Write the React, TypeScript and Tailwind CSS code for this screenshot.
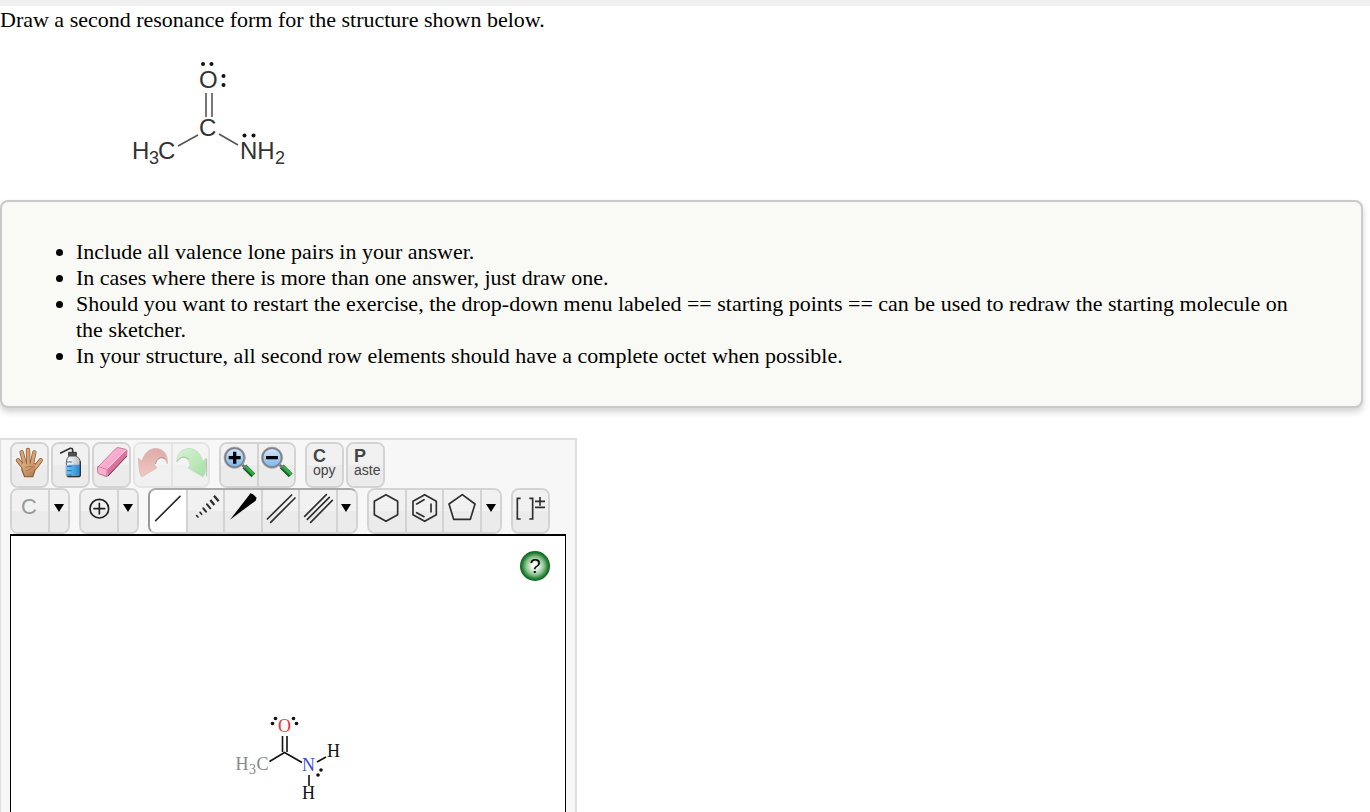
import type { ReactNode } from "react"

const hints = [
  "Include all valence lone pairs in your answer.",
  "In cases where there is more than one answer, just draw one.",
  "Should you want to restart the exercise, the drop-down menu labeled == starting points == can be used to redraw the starting molecule on the sketcher.",
  "In your structure, all second row elements should have a complete octet when possible.",
]

const Group = ({ children, className = "" }: { children: ReactNode; className?: string }) => (
  <div className={`flex h-[46px] overflow-hidden rounded-lg border-2 border-[#d3d3d3] ${className}`}>
    {children}
  </div>
)

const Tool = ({
  label,
  children,
  active = false,
  disabled = false,
}: {
  label: string
  children: ReactNode
  active?: boolean
  disabled?: boolean
}) => (
  <button
    type="button"
    aria-label={label}
    disabled={disabled}
    className={`box-content flex min-w-0 flex-1 justify-center overflow-hidden border-l-2 border-[#d3d3d3] first:border-l-0 ${
      active ? "bg-white" : "bg-linear-to-b from-[#f1f1f1] from-50% to-[#ebebeb] to-50%"
    }`}
  >
    {children}
  </button>
)

const Arrow = ({ label }: { label: string }) => (
  <button
    type="button"
    aria-label={label}
    className="box-content flex w-[18px] shrink-0 justify-center border-l-2 border-[#d3d3d3] bg-linear-to-b from-[#f1f1f1] from-50% to-[#ebebeb] to-50% pt-[14px]"
  >
    <svg viewBox="0 0 11 8" className="h-2 w-[11px]">
      <path d="M0 0h10L5 8z" fill="#000" />
    </svg>
  </button>
)

// every tool icon is drawn on a 105 x 126 grid
const Icon = ({ box, children }: { box: string; children: ReactNode }) => (
  <svg
    viewBox={box}
    className="h-[42px] w-[35px] shrink-0"
    fill="none"
    stroke="#2e2e2e"
    strokeWidth="5"
    strokeLinecap="round"
    strokeLinejoin="round"
  >
    {children}
  </svg>
)

const Gradients = () => (
  <svg className="absolute size-0" aria-hidden="true">
    <defs>
      <linearGradient id="skin" x1="0" y1="0" x2="1" y2="1">
        <stop offset="0" stopColor="#dcae82" />
        <stop offset="1" stopColor="#b07a4c" />
      </linearGradient>
      <linearGradient id="water" x1="0" y1="0" x2="1" y2="0">
        <stop offset="0" stopColor="#7cc4f2" />
        <stop offset="1" stopColor="#2787cf" />
      </linearGradient>
      <linearGradient id="bottle" x1="0" y1="0" x2="1" y2="0">
        <stop offset="0" stopColor="#ffffff" />
        <stop offset="1" stopColor="#b8bcc0" />
      </linearGradient>
      <linearGradient id="rubber" x1="0" y1="0" x2="1" y2="1">
        <stop offset="0" stopColor="#ffc4dd" />
        <stop offset="1" stopColor="#f08db8" />
      </linearGradient>
      <linearGradient id="undo" x1="0" y1="0" x2="0" y2="1">
        <stop offset="0" stopColor="#c8625e" />
        <stop offset="1" stopColor="#e89a90" />
      </linearGradient>
      <linearGradient id="redo" x1="0" y1="0" x2="1" y2="1">
        <stop offset="0" stopColor="#b8f0b0" />
        <stop offset="1" stopColor="#58c858" />
      </linearGradient>
      <linearGradient id="lens" x1="0" y1="0" x2="0" y2="1">
        <stop offset="0" stopColor="#d4eaff" />
        <stop offset="1" stopColor="#78b4ec" />
      </linearGradient>
    </defs>
  </svg>
)

const Magnifier = ({ x, children }: { x: number; children: ReactNode }) => (
  <g>
    <path d={`M${x + 29} 91l27 27`} stroke="#16602a" strokeWidth="16" strokeLinecap="butt" />
    <path d={`M${x + 31} 90l26 25`} stroke="#2fae48" strokeWidth="9" strokeLinecap="butt" />
    <path d={`M${x + 20} 84l10 9`} stroke="#777" strokeWidth="8" />
    <circle cx={x} cy="65" r="29" fill="url(#lens)" stroke="#808186" strokeWidth="6" />
    <circle cx={x} cy="65" r="32" stroke="#a9a9ad" strokeWidth="2" />
    {children}
  </g>
)

const Exercise = () => (
  <svg
    viewBox="132 58 156 110"
    className="mt-[25px] ml-[132px] h-[110px] w-[156px]"
    role="img"
    aria-label="Acetamide with lone pairs"
    fontFamily="'Liberation Sans', Arial, sans-serif"
    fontSize="24"
    fill="#333"
  >
    <text x="199" y="88">O</text>
    <text x="199" y="136">C</text>
    <text x="132" y="159">H</text>
    <text x="149" y="164" fontSize="18">3</text>
    <text x="158" y="159">C</text>
    <text x="240" y="159">NH</text>
    <text x="275" y="164" fontSize="18">2</text>
    <path d="M206 93v24M212 93v24M178 146l20-11M219 134l19 11" stroke="#555" strokeWidth="1.6" />
    <g fill="#111">
      <circle cx="203" cy="64" r="2" />
      <circle cx="211.500" cy="64" r="2" />
      <circle cx="223.500" cy="76" r="2" />
      <circle cx="223.500" cy="85" r="2" />
      <circle cx="244.500" cy="135.500" r="2" />
      <circle cx="253.500" cy="135.500" r="2" />
    </g>
  </svg>
)

const Sketch = () => (
  <svg
    viewBox="234 712 110 92"
    className="mt-[131px] ml-[223px] h-[92px] w-[110px]"
    role="img"
    aria-label="Starting molecule"
    fontFamily="'Liberation Serif', 'Times New Roman', serif"
    fontSize="18"
  >
    <text x="278" y="732" fill="#e8323a">O</text>
    <text x="302" y="771" fill="#3a4fd0">N</text>
    <text x="327" y="757" fill="#111">H</text>
    <text x="302" y="799" fill="#111">H</text>
    <g fill="#888">
      <text x="235.500" y="770">H</text>
      <text x="249" y="774" fontSize="14">3</text>
      <text x="256.500" y="770">C</text>
    </g>
    <path
      d="M282.500 736v16M287 736v16M269.500 761.500L284.500 752.500L302 762.500M317 762l9-5M309 775v11"
      fill="none"
      stroke="#111"
      strokeWidth="1.6"
    />
    <g fill="#111">
      <circle cx="272.500" cy="723.500" r="1.800" />
      <circle cx="275.500" cy="718.500" r="1.800" />
      <circle cx="293.500" cy="718.500" r="1.800" />
      <circle cx="296.500" cy="723.500" r="1.800" />
      <circle cx="321" cy="770" r="1.800" />
      <circle cx="318" cy="775" r="1.800" />
    </g>
  </svg>
)

const Toolbar = () => (
  <div className="font-['Liberation_Sans',Arial,sans-serif]">
    <div className="flex gap-[9px]">
      <div className="flex gap-0.5">
        <Group className="w-[39px]">
          <Tool label="Move">
            <Icon box="36 24 105 126">
              <g stroke="#8b5a30" strokeWidth="13">
                <path d="M54 73l18 22M65 49l10 38M84 42l1 42M103 49l-8 38M122 73l-17 22" />
              </g>
              <path d="M66 84h40l1 12-9 26H74l-8-20z" fill="#8b5a30" stroke="#8b5a30" strokeWidth="4" />
              <g stroke="#d4a275" strokeWidth="9">
                <path d="M54 73l18 22M65 49l10 38M84 42l1 42M103 49l-8 38M122 73l-17 22" />
              </g>
              <path d="M67 84h38l1 12-9 25H75l-7-19z" fill="url(#skin)" stroke="none" />
              <path d="M76 94c8-4 15-3 22-1M79 105c9-3 13-6 19-13" stroke="#a56b3c" strokeWidth="2" />
            </Icon>
          </Tool>
        </Group>
        <Group className="w-[39px]">
          <Tool label="Clear">
            <Icon box="159 24 105 126">
              <path d="M182 51l29-14q7-1 7 6v10" stroke="#333" />
              <rect x="207" y="49" width="22" height="10" fill="#555" stroke="#333" strokeWidth="3" />
              <path d="M207 60h21q13 7 13 20v36q0 6-6 6h-30q-6 0-6-6V80q0-13 8-20z" fill="url(#bottle)" stroke="#555" strokeWidth="3" />
              <path d="M198 86h43v30q0 6-6 6h-31q-6 0-6-6z" fill="url(#water)" stroke="none" />
              <path d="M202 78h12M202 91h12M202 104h12M202 117h12" stroke="#266aa0" strokeWidth="3" />
              <path d="M241 78v38q0 6-6 6h-31" stroke="#333" strokeWidth="4" />
            </Icon>
          </Tool>
        </Group>
        <Group className="w-[39px]">
          <Tool label="Erase">
            <Icon box="282 24 105 126">
              <path d="M294 93l53-55q3-4 9-3l22 5q4 2 3 8l-1 11-56 60q-3 4-8 2l-19-8q-5-2-4-8z" fill="url(#rubber)" stroke="#b0567f" strokeWidth="2" />
              <path d="M324 119l56-60 1-19-59 60z" fill="#d873a0" stroke="none" />
              <path d="M294 92l27 8-1 21-23-8q-5-2-4-8z" fill="#f9b0cf" stroke="#c46b92" strokeWidth="2" />
              <path d="M321 98l57-57" stroke="#ffd5e6" strokeWidth="3" />
              <path d="M325 119l55-58" stroke="#5c3345" strokeWidth="3" />
            </Icon>
          </Tool>
        </Group>
        <Group className="w-[77px] opacity-50">
          <Tool label="Undo" disabled>
            <Icon box="15 24 105 126">
              <path
                d="M25 67l11 9C43 49 61 34 84 38c21 4 30 22 28 45-5-16-20-25-34-9l-5 13 7 9-44 26c-6-2-9-22-11-55z"
                fill="url(#undo)"
                stroke="#b86a66"
                strokeWidth="2"
              />
              <path d="M77 83c2-14 15-24 28-15" stroke="#444" strokeWidth="3" />
            </Icon>
          </Tool>
          <Tool label="Redo" disabled>
            <Icon box="127 24 105 126">
              <path
                d="M227 67l-11 9c-7-27-25-42-48-38-21 4-30 22-30 40 9-16 24-20 36-4l5 13-7 9 44 26c8-2 11-22 11-55z"
                fill="url(#redo)"
                stroke="#7cc07c"
                strokeWidth="2"
              />
              <path d="M228 70v50M141 75c8-12 20-17 32-6" stroke="#555" strokeWidth="2" />
            </Icon>
          </Tool>
        </Group>
      </div>

      <Group className="w-[77px]">
        <Tool label="Zoom in">
          <Icon box="273 24 105 126">
            <Magnifier x={314}>
              <path d="M314 47v36M296 65h36" stroke="#000" strokeWidth="10" strokeLinecap="butt" />
            </Magnifier>
          </Icon>
        </Tool>
        <Tool label="Zoom out">
          <Icon box="385 24 105 126">
            <Magnifier x={424}>
              <path d="M406 65h36" stroke="#000" strokeWidth="10" strokeLinecap="butt" />
            </Magnifier>
          </Icon>
        </Tool>
      </Group>

      <div className="flex gap-0.5">
        {["Copy", "Paste"].map((name) => (
          <Group key={name} className="w-[39px]">
            <Tool label={name}>
              <span className="flex w-full flex-col items-start pt-[5px] pl-[6px] text-left text-[#444]">
                <span className="text-[18px] leading-[14px] font-bold">{name[0]}</span>
                <span className="text-[14px] leading-[14px]">{name.slice(1)}</span>
              </span>
            </Tool>
          </Group>
        ))}
      </div>
    </div>

    <div className="flex gap-[9px]">
      <Group className="w-[60px]">
        <Tool label="Carbon">
          <span className="pt-1 pr-0.5 text-[22px] leading-[26px] text-[#999]">C</span>
        </Tool>
        <Arrow label="More elements" />
      </Group>

      <Group className="w-[60px]">
        <Tool label="Increase charge">
          <Icon box="243 162 105 126">
            <circle cx="295" cy="218" r="28" stroke="#222" />
            <path d="M295 202v32M279 218h32" stroke="#222" />
          </Icon>
        </Tool>
        <Arrow label="More charges" />
      </Group>

      <Group className="w-[210px] border-t-[#aaa] border-l-[#999]">
        <Tool label="Single bond" active>
          <Icon box="60 162 105 126">
            <path d="M77 254l73-73" />
          </Icon>
        </Tool>
        <Tool label="Hashed bond">
          <Icon box="173 162 105 126">
            <path d="M199 239l4 4M209 229l5 6" />
            <path d="M219 217l8 10M230 205l10 12" strokeWidth="6" />
            <path d="M240 192l12 15M251 179l14 17" strokeWidth="7" strokeLinecap="butt" />
          </Icon>
        </Tool>
        <Tool label="Wedge bond">
          <Icon box="286 162 105 126">
            <path d="M301 251l57-73 4-6 8 3 11 10-3 9z" fill="#000" stroke="none" />
          </Icon>
        </Tool>
        <Tool label="Double bond">
          <Icon box="398 162 105 126">
            <path d="M411 249l73-72M421 259l73-73" />
          </Icon>
        </Tool>
        <Tool label="Triple bond">
          <Icon box="31 162 105 126">
            <path d="M42 241l65-65M50 250l66-66M60 259l65-66" />
          </Icon>
        </Tool>
        <Arrow label="More bonds" />
      </Group>

      <Group className="w-[135px]">
        <Tool label="Cyclohexane">
          <Icon box="237 162 105 126">
            <path d="M288 176l35 20v40l-35 20-35-20v-40z" />
          </Icon>
        </Tool>
        <Tool label="Benzene">
          <Icon box="350 162 105 126">
            <path d="M403 176l35 20v40l-35 20-35-20v-40zM422 204v24M379 204l22-13M379 230l22 12" />
          </Icon>
        </Tool>
        <Tool label="Cyclopentane">
          <Icon box="43 162 105 126">
            <path d="M95 176l38 28-14 46H69l-14-46z" />
          </Icon>
        </Tool>
        <Arrow label="More rings" />
      </Group>

      <Group className="w-[39px]">
        <Tool label="Brackets and charge">
          <Icon box="249 162 105 126">
            <g strokeLinecap="butt" strokeLinejoin="miter">
              <path d="M272 187h-10v62h10M298 187h10v62h-10" />
              <path d="M315 196h30M330 183v26M315 214h30" />
            </g>
          </Icon>
        </Tool>
      </Group>
    </div>
  </div>
)

export default function App() {
  return (
    <div className="flex min-h-screen flex-col bg-white font-['Liberation_Serif','Times_New_Roman',serif] text-[22px] leading-[26px] text-black">
      <Gradients />
      <div className="h-1.5 bg-[#f0f0f0]" />
      <p className="mt-px">Draw a second resonance form for the structure shown below.</p>
      <Exercise />

      <section className="mt-8 mr-[7px] rounded-lg border-2 border-[#c9c9c9] bg-[#f9faf5] py-[37px] pr-12 shadow-[0_4px_6px_rgba(0,0,0,0.18)]">
        <ul className="list-disc pl-[74px]">
          {hints.map((hint) => (
            <li key={hint}>{hint}</li>
          ))}
        </ul>
      </section>

      <main className="mt-[30px] flex w-[577px] max-w-full grow flex-col border-t-2 border-r-2 border-l border-[#dedede] bg-[#f7f7f7] px-[9px] pt-0.5">
        <Toolbar />
        <div className="grow border-x border-t-2 border-black bg-white">
          <div className="flex justify-end pt-[15px] pr-[15px]">
            <button
              type="button"
              aria-label="Help"
              className="size-[30px] rounded-full bg-[radial-gradient(circle,#ffffff_12%,#8cc48f_42%,#1f7a30_62%,#0f6420_70%)] font-['Liberation_Sans',Arial,sans-serif] text-[20px] leading-[28px]"
            >
              ?
            </button>
          </div>
          <Sketch />
        </div>
      </main>
    </div>
  )
}
